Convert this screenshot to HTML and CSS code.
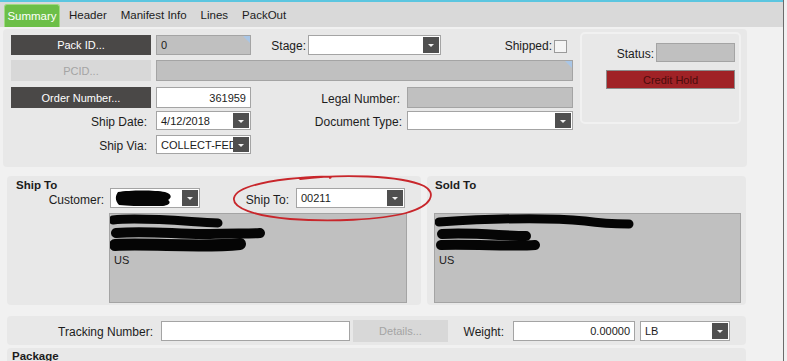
FILE: index.html
```html
<!DOCTYPE html>
<html>
<head>
<meta charset="utf-8">
<link rel="stylesheet" href="styles.css">
</head>
<body>
<div class="window">
  <div class="topline"></div>
  <div class="tabbar">
    <div class="tab active">Summary</div>
    <div class="tab">Header</div>
    <div class="tab">Manifest Info</div>
    <div class="tab">Lines</div>
    <div class="tab">PackOut</div>
  </div>
  <div class="content">
    <div class="panel head">
      <div class="form">
        <div class="row r1">
          <div class="btn dark w140">Pack ID...</div>
          <div class="field gray corner w95 ml5">0</div>
          <div class="lbl w57 pr2">Stage:</div>
          <div class="select w133"><span class="val"></span><span class="arrow"></span></div>
          <div class="lbl w113 pr2">Shipped:</div>
          <div class="check"></div>
        </div>
        <div class="row r2">
          <div class="btn light w140">PCID...</div>
          <div class="field gray corner w417 ml5"></div>
        </div>
        <div class="row r3">
          <div class="btn dark w140">Order Number...</div>
          <div class="field white right w95 ml5">361959</div>
          <div class="lbl w156 pr7">Legal Number:</div>
          <div class="field gray w166"></div>
        </div>
        <div class="row r4">
          <div class="lbl w145 pr9">Ship Date:</div>
          <div class="select w95"><span class="val">4/12/2018</span><span class="arrow"></span></div>
          <div class="lbl w156 pr5">Document Type:</div>
          <div class="select w166"><span class="val"></span><span class="arrow"></span></div>
        </div>
        <div class="row r5">
          <div class="lbl w145 pr9">Ship Via:</div>
          <div class="select w95"><span class="val">COLLECT-FEDEX</span><span class="arrow"></span></div>
        </div>
      </div>
      <div class="statusbox">
        <div class="statusrow">
          <div class="lbl pr2">Status:</div>
          <div class="field gray w79"></div>
        </div>
        <div class="credit">Credit Hold</div>
      </div>
    </div>

    <div class="groups">
      <div class="group shipto">
        <div class="gtitle">Ship To</div>
        <div class="crow">
          <div class="lbl w97">Customer:</div>
          <div class="select w90 ml6"><span class="val">
            <svg class="blob" width="60" height="18" viewBox="0 0 60 18"><path d="M3 3 C 15 1, 40 1, 50 3 C 57 5, 57 9, 53 11 C 56 13, 55 16, 48 17 C 35 18, 15 17, 4 16 C 0 12, 0 7, 3 3 Z" fill="#050505"/></svg>
          </span><span class="arrow"></span></div>
          <div class="lbl w96 pr7">Ship To:</div>
          <div class="select w109"><span class="val">00211</span><span class="arrow"></span></div>
        </div>
        <div class="address addr-ship">
          <svg class="scribble" width="296" height="40" viewBox="0 0 296 40">
            <g fill="none" stroke="#050505" stroke-linecap="round">
              <path d="M3 6 C 30 3, 70 7, 108 9" stroke-width="9"/>
              <path d="M6 19 C 40 16, 70 21, 100 20 C 120 19, 140 20, 150 19" stroke-width="10"/>
              <path d="M5 31 C 40 29, 90 34, 130 30" stroke-width="12"/>
            </g>
          </svg>
          <div class="country">US</div>
        </div>
      </div>
      <div class="group soldto">
        <div class="gtitle">Sold To</div>
        <div class="address addr-sold">
          <svg class="scribble" width="305" height="40" viewBox="0 0 305 40">
            <g fill="none" stroke="#050505" stroke-linecap="round">
              <path d="M4 8 C 50 5, 110 3, 150 7 C 170 10, 185 10, 194 10" stroke-width="9"/>
              <path d="M7 20 C 35 18, 70 22, 91 22" stroke-width="10"/>
              <path d="M6 31 C 40 30, 80 33, 100 31" stroke-width="10"/>
            </g>
          </svg>
          <div class="country">US</div>
        </div>
      </div>
    </div>

    <div class="group tracking">
      <div class="lbl w146">Tracking Number:</div>
      <div class="field white w189 h20 ml8"></div>
      <div class="btn light w95 h22 ml3">Details...</div>
      <div class="lbl w56">Weight:</div>
      <div class="field white right w122 h20 ml9">0.00000</div>
      <div class="select w90 h20 ml5"><span class="val">LB</span><span class="arrow"></span></div>
    </div>

    <div class="group package">Package</div>
  </div>

  <svg class="annotation" width="787" height="361" viewBox="0 0 787 361">
    <path d="M300 179 C 340 174, 400 175, 424 186 C 437 193, 432 206, 406 213 C 380 220, 330 222, 290 219 C 255 216, 232 208, 234 198 C 236 189, 255 183, 288 179 C 315 176, 335 176, 330 178" fill="none" stroke="#c8262b" stroke-width="1.8" stroke-linecap="round"/>
  </svg>
</div>
</body>
</html>
```

FILE: styles.css
```css
* { box-sizing: border-box; }

body {
  margin: 0;
  background: #f1f1f1;
  font-family: "Liberation Sans", Arial, sans-serif;
  font-size: 12px;
  color: #1c1c1c;
}

.window {
  position: relative;
  width: 784px;
  height: 361px;
  border-right: 1px solid #6b6b6b;
  background: #f1f1f1;
  overflow: hidden;
}

.topline {
  height: 2px;
  background: #5cc6e0;
}

.tabbar {
  height: 25px;
  background: #d9d9d9;
  display: flex;
  align-items: flex-end;
  padding-left: 4px;
}

.tab {
  height: 23px;
  line-height: 22px;
  padding: 0 7px;
  font-size: 11.5px;
  color: #1c1c1c;
}

.tab.active {
  width: 56px;
  padding: 0;
  margin-right: 2px;
  text-align: center;
  background: #6cbf48;
  color: #fff;
  border: 1px solid #a0da82;
  border-bottom: none;
  border-radius: 3px 3px 0 0;
}

.content {
  padding: 2px 0 0 3px;
}

.panel.head {
  width: 744px;
  height: 138px;
  background: #e8e8e8;
  border-radius: 4px;
  display: flex;
  padding: 6px 0 0 8px;
}

.form { width: 562px; }

.row { display: flex; align-items: center; }
.r1 { height: 20px; }
.r2 { height: 21px; margin-top: 5px; }
.r3 { height: 21px; margin-top: 6px; }
.r4 { height: 19px; margin-top: 3px; }
.r5 { height: 19px; margin-top: 5px; }

.row > .btn, .row > .field, .row > .select { height: 100%; }

.lbl {
  text-align: right;
  white-space: nowrap;
  flex-shrink: 0;
  padding-top: 2px;
}

.btn {
  display: flex;
  align-items: center;
  justify-content: center;
  flex-shrink: 0;
  font-size: 11px;
}
.btn.dark { background: #4a4847; color: #fff; }
.btn.light { background: #d8d8d8; color: #a4a4a4; }

.field {
  position: relative;
  display: flex;
  align-items: center;
  padding: 0 4px;
  border: 1px solid #a4a4a4;
  flex-shrink: 0;
  font-size: 11px;
}
.field.gray { background: #c0c0c0; }
.field.white { background: #fff; }
.field.right { justify-content: flex-end; }
.field.corner::after {
  content: "";
  position: absolute;
  top: 0;
  right: 0;
  border-top: 7px solid #a9c6e6;
  border-left: 7px solid transparent;
}

.select {
  display: flex;
  background: #fff;
  border: 1px solid #a4a4a4;
  padding: 1px;
  flex-shrink: 0;
  font-size: 11px;
}
.select .val {
  flex: 1;
  display: flex;
  align-items: center;
  padding-left: 3px;
  overflow: hidden;
  white-space: nowrap;
}
.select .arrow {
  width: 16px;
  background: #4f4f4f;
  display: flex;
  align-items: flex-start;
  justify-content: center;
  padding-top: 7px;
  flex-shrink: 0;
}
.select .arrow::after {
  content: "";
  border-left: 3px solid transparent;
  border-right: 3px solid transparent;
  border-top: 3px solid #f2f2f2;
}

.check {
  width: 13px;
  height: 13px;
  background: #f4f4f4;
  border: 1px solid #9a9a9a;
  margin-top: 2px;
  flex-shrink: 0;
}

.statusbox {
  width: 161px;
  height: 92px;
  margin: -3px 0 0 7px;
  background: #e8e8e8;
  border: 2px solid #f1f1f1;
  border-radius: 5px;
  padding: 9px 4px 0 0;
}
.statusrow {
  display: flex;
  justify-content: flex-end;
  align-items: center;
  height: 19px;
}
.statusrow .field { height: 100%; }
.credit {
  width: 129px;
  height: 19px;
  margin: 8px 0 0 auto;
  background: #a02226;
  border: 1px solid #8c8c8c;
  color: #4a0c0c;
  font-size: 11px;
  display: flex;
  align-items: center;
  justify-content: center;
}

.groups {
  display: flex;
  gap: 6px;
  margin: 9px 0 0 4px;
  height: 129px;
}

.group {
  background: #e8e8e8;
  border-radius: 4px;
}
.shipto, .soldto { padding-top: 2px; }
.shipto { width: 414px; }
.soldto { width: 319px; }

.gtitle {
  font-weight: bold;
  line-height: 14px;
  font-size: 11.5px;
}
.shipto .gtitle { padding-left: 9px; }
.soldto .gtitle { padding-left: 8px; }

.crow {
  display: flex;
  align-items: center;
  height: 20px;
  margin-top: -4px;
}
.crow .select { height: 100%; }
.crow .lbl { padding-top: 4px; }

.address {
  height: 90px;
  background: #c0c0c0;
  border: 1px solid #a4a4a4;
}
.addr-ship { width: 298px; margin: 5px 0 0 102px; }
.addr-sold { width: 307px; margin: 21px 0 0 7px; }
.scribble { display: block; }
.country { padding-left: 4px; line-height: 12px; font-size: 11px; }

.tracking {
  display: flex;
  align-items: center;
  width: 739px;
  height: 29px;
  margin: 11px 0 0 4px;
}

.package {
  width: 739px;
  height: 20px;
  margin: 3px 0 0 4px;
  padding: 2px 0 0 5px;
  font-weight: bold;
  font-size: 11.5px;
}

.annotation {
  position: absolute;
  top: 0;
  left: 0;
  pointer-events: none;
}

.blob { display: block; }

.w56 { width: 56px; }
.w57 { width: 57px; }
.w79 { width: 79px; }
.w90 { width: 90px; }
.w95 { width: 95px; }
.w96 { width: 96px; }
.w97 { width: 97px; }
.w109 { width: 109px; }
.w113 { width: 113px; }
.w122 { width: 122px; }
.w133 { width: 133px; }
.w140 { width: 140px; }
.w145 { width: 145px; }
.w146 { width: 146px; }
.w156 { width: 156px; }
.w166 { width: 166px; }
.w189 { width: 189px; }
.w417 { width: 417px; }
.h20 { height: 20px; }
.h22 { height: 22px; }
.ml3 { margin-left: 3px; }
.ml5 { margin-left: 5px; }
.ml6 { margin-left: 6px; }
.ml8 { margin-left: 8px; }
.ml9 { margin-left: 9px; }
.pr2 { padding-right: 2px; }
.pr5 { padding-right: 5px; }
.pr7 { padding-right: 7px; }
.pr9 { padding-right: 9px; }
```
